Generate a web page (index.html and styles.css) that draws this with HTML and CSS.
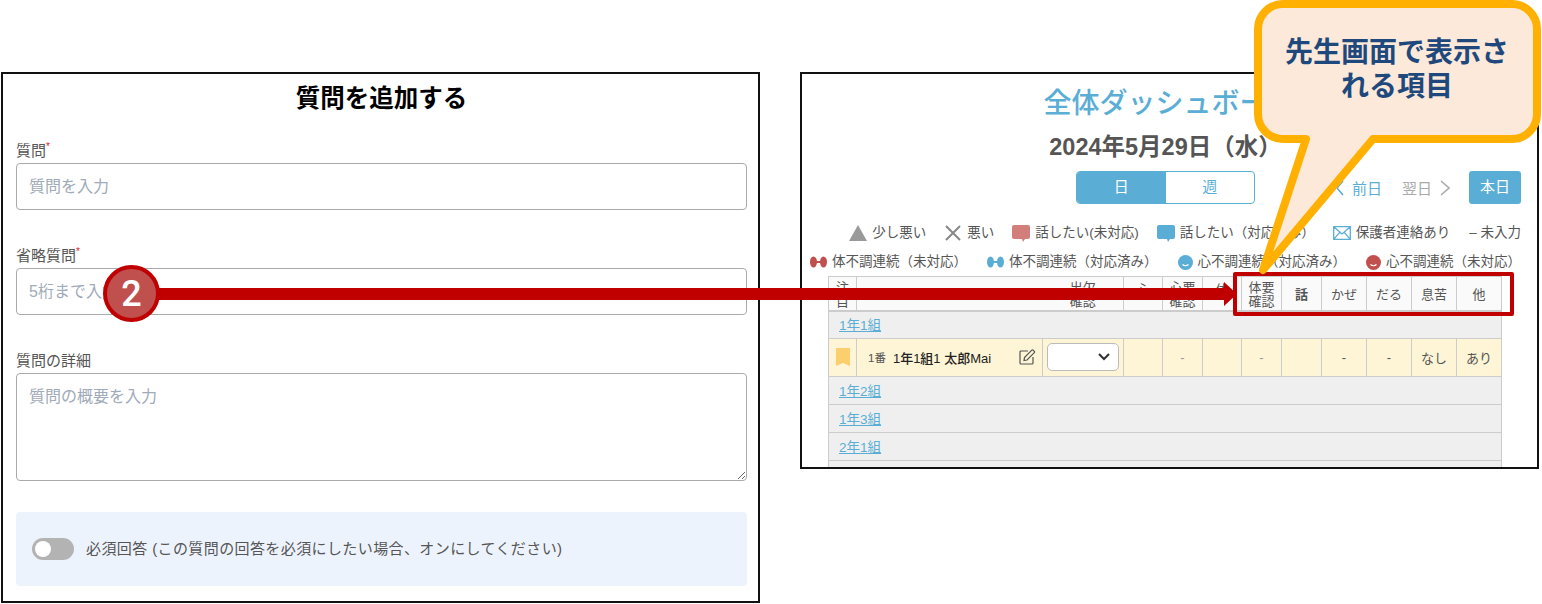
FILE: index.html
```html
<!DOCTYPE html>
<html lang="ja">
<head>
  <meta charset="UTF-8">
  <title>質問を追加する</title>
  <link rel="stylesheet" href="styles.css">
</head>
<body>
  <div class="page">
    <section class="form-panel">
      <h2>質問を追加する</h2>
      <div class="form-group">
        <label>質問<sup>*</sup></label>
        <input type="text" placeholder="質問を入力">
      </div>
      <div class="form-group">
        <label>省略質問<sup>*</sup></label>
        <input type="text" placeholder="5桁まで入力">
      </div>
      <div class="form-group">
        <label>質問の詳細</label>
        <textarea placeholder="質問の概要を入力"></textarea>
      </div>
      <div class="required-box">
        <span class="switch"><span class="knob"></span></span>
        <span class="required-text">必須回答 (この質問の回答を必須にしたい場合、オンにしてください)</span>
      </div>
    </section>

    <section class="dash-panel">
      <h1>全体ダッシュボード</h1>
      <div class="date">2024年5月29日（水）</div>
      <div class="nav-row">
        <div class="toggle">
          <span class="toggle-on">日</span>
          <span class="toggle-off">週</span>
        </div>
        <svg class="chev prev" width="8" height="16" viewBox="0 0 8 16"><path d="M7 1 1 8l6 7" fill="none" stroke="#5aaed6" stroke-width="1.6"/></svg>
        <span class="nav-link">前日</span>
        <span class="nav-link off">翌日</span>
        <svg class="chev next" width="10" height="16" viewBox="0 0 10 16"><path d="M1 1l8 7-8 7" fill="none" stroke="#aaa" stroke-width="1.6"/></svg>
        <span class="today">本日</span>
      </div>

      <div class="legend one">
        <span class="item"><svg width="18" height="16" viewBox="0 0 18 16"><path d="M9 0 18 16H0z" fill="#999"/></svg>少し悪い</span>
        <span class="item"><svg width="18" height="16" viewBox="0 0 18 16"><path d="M2 1l14 14M16 1 2 15" stroke="#888" stroke-width="2"/></svg>悪い</span>
        <span class="item"><svg width="18" height="17" viewBox="0 0 18 17"><path d="M2 0h14a2 2 0 0 1 2 2v10a2 2 0 0 1-2 2h-3l-2 3-1-3H2a2 2 0 0 1-2-2V2a2 2 0 0 1 2-2z" fill="#d27f7c"/></svg>話したい(未対応)</span>
        <span class="item"><svg width="18" height="17" viewBox="0 0 18 17"><path d="M2 0h14a2 2 0 0 1 2 2v10a2 2 0 0 1-2 2h-3l-2 3-1-3H2a2 2 0 0 1-2-2V2a2 2 0 0 1 2-2z" fill="#5aaed6"/></svg>話したい（対応済み）</span>
        <span class="item"><svg width="18" height="14" viewBox="0 0 18 14"><path d="M.7.7h16.600v12.600H.7zM.7.7 9 8l8.300-7.300M.7 13.300l6-7M17.300 13.300l-6-7" fill="none" stroke="#5aaed6" stroke-width="1.300"/></svg>保護者連絡あり</span>
        <span class="item last">– 未入力</span>
      </div>
      <div class="legend two">
        <span class="item"><svg width="17" height="12" viewBox="0 0 17 12"><g fill="#c0504d"><ellipse cx="3.500" cy="6" rx="3.500" ry="5.500"/><ellipse cx="13.500" cy="6" rx="3.500" ry="5.500"/><rect x="5" y="5" width="7" height="2"/></g></svg>体不調連続（未対応）</span>
        <span class="item"><svg width="17" height="12" viewBox="0 0 17 12"><g fill="#5aaed6"><ellipse cx="3.500" cy="6" rx="3.500" ry="5.500"/><ellipse cx="13.500" cy="6" rx="3.500" ry="5.500"/><rect x="5" y="5" width="7" height="2"/></g></svg>体不調連続（対応済み）</span>
        <span class="item"><svg width="15" height="15" viewBox="0 0 15 15"><circle cx="7.500" cy="7.500" r="7.500" fill="#5aaed6"/><path d="M4.500 9.500q3 2.500 6 0" fill="none" stroke="#fff" stroke-width="1.200"/></svg>心不調連続（対応済み）</span>
        <span class="item"><svg width="15" height="15" viewBox="0 0 15 15"><circle cx="7.500" cy="7.500" r="7.500" fill="#c0504d"/><path d="M4.500 9.500q3 2.500 6 0" fill="none" stroke="#fff" stroke-width="1.200"/></svg>心不調連続（未対応）</span>
      </div>

      <table class="dash-table">
        <colgroup>
          <col class="c28"><col class="c186"><col class="c81"><col class="c39"><col class="c40"><col class="c39"><col class="c40"><col class="c40"><col class="c45"><col class="c45"><col class="c45"><col class="c45">
        </colgroup>
        <thead>
          <tr>
            <th>注<br>目</th>
            <th class="no-right"></th>
            <th class="no-left">出欠<br>確認</th>
            <th class="raised">心</th>
            <th>心要<br>確認</th>
            <th class="raised">体</th>
            <th>体要<br>確認</th>
            <th class="strong">話</th>
            <th>かぜ</th>
            <th>だる</th>
            <th>息苦</th>
            <th>他</th>
          </tr>
        </thead>
        <tbody>
          <tr class="group"><td colspan="12"><a href="#">1年1組</a></td></tr>
          <tr class="student">
            <td class="mark"><svg width="14" height="18" viewBox="0 0 14 18"><path d="M0 1a1 1 0 0 1 1-1h12a1 1 0 0 1 1 1v17l-7-3-7 3z" fill="#fbcf6e"/></svg></td>
            <td>
              <div class="name-cell">
                <span class="num">1番</span>
                <span class="name">1年1組1 太郎Mai</span>
                <svg class="edit" width="17" height="16" viewBox="0 0 17 16"><path d="M9 2H2a1 1 0 0 0-1 1v11a1 1 0 0 0 1 1h11a1 1 0 0 0 1-1V8" fill="none" stroke="#555" stroke-width="1.200"/><path d="M5.500 8.500 12.800 1.200a1 1 0 0 1 1.400 0l1.100 1.100a1 1 0 0 1 0 1.400L8 11l-3 .6z" fill="none" stroke="#555" stroke-width="1.200"/></svg>
              </div>
            </td>
            <td>
              <div class="select-box"><svg width="12" height="8" viewBox="0 0 12 8"><path d="M1 1l5 5 5-5" fill="none" stroke="#333" stroke-width="2"/></svg></div>
            </td>
            <td></td>
            <td class="dim">-</td>
            <td></td>
            <td class="dim">-</td>
            <td></td>
            <td>-</td>
            <td>-</td>
            <td>なし</td>
            <td>あり</td>
          </tr>
          <tr class="group"><td colspan="12"><a href="#">1年2組</a></td></tr>
          <tr class="group"><td colspan="12"><a href="#">1年3組</a></td></tr>
          <tr class="group"><td colspan="12"><a href="#">2年1組</a></td></tr>
          <tr class="group"><td colspan="12"></td></tr>
        </tbody>
      </table>
    </section>
  </div>

  <!-- annotations drawn over the two panels -->
  <div class="red-box"></div>
  <svg class="arrow" width="1090" height="24" viewBox="0 0 1090 24"><path d="M0 6h1077V0l13 12-13 12v-6H0z" fill="#c00000"/></svg>
  <div class="badge">2</div>
  <svg class="callout" width="292" height="276" viewBox="0 0 292 276"><path d="M33 4h229a25 25 0 0 1 25 25v85a25 25 0 0 1-25 25H123L13 270l43-131H33A25 25 0 0 1 8 114V29A25 25 0 0 1 33 4z" fill="#fce9d9" stroke="#ffb000" stroke-width="8" stroke-linejoin="round"/></svg>
  <div class="callout-text">先生画面で表示さ<br>れる項目</div>
</body>
</html>
```

FILE: styles.css
```css
* {
  box-sizing: border-box;
}
body {
  margin: 0;
  background: #fff;
  font-family: "Liberation Sans", "Noto Sans CJK JP", sans-serif;
  color: #555;
}
.page {
  display: flex;
  align-items: flex-start;
  gap: 40px;
  padding: 72px 0 0 1px;
  width: 1542px;
  height: 604px;
  overflow: hidden;
}

/* left panel */
.form-panel {
  width: 759px;
  height: 531px;
  border: 2px solid #111;
  padding: 0 11px 0 13px;
}
.form-panel h2 {
  margin: 0;
  height: 68px;
  padding-top: 7px;
  font-size: 24.500px;
  line-height: 36px;
  font-weight: 700;
  color: #000;
  text-align: center;
}
.form-group {
  margin-bottom: 37px;
}
.form-group label {
  display: block;
  height: 18px;
  margin-bottom: 3px;
  font-size: 15px;
  line-height: 18px;
  color: #555;
}
.form-group sup {
  color: #e02020;
  font-size: 10px;
  line-height: 0;
}
.form-group input,
.form-group textarea {
  display: block;
  width: 100%;
  padding: 0 12px;
  border: 1px solid #aaa;
  border-radius: 4px;
  font-family: inherit;
  font-size: 16px;
  background: #fff;
}
.form-group input {
  height: 47px;
}
.form-group textarea {
  height: 108px;
  padding-top: 13px;
  line-height: 20px;
}
input::placeholder,
textarea::placeholder {
  color: #a0aab8;
  opacity: 1;
}
.required-box {
  display: flex;
  align-items: center;
  gap: 12px;
  height: 74px;
  margin-top: -6px;
  padding-left: 16px;
  border-radius: 4px;
  background: #edf3fd;
  font-size: 15px;
}
.required-text {
  padding-bottom: 3px;
  letter-spacing: .4px;
}
.switch {
  display: block;
  width: 42px;
  height: 22px;
  padding: 3px;
  border-radius: 11px;
  background: #b3b3b3;
}
.knob {
  display: block;
  width: 16px;
  height: 16px;
  border-radius: 50%;
  background: #fff;
}

/* right panel */
.dash-panel {
  width: 739px;
  height: 397px;
  border: 2px solid #111;
  padding: 10px 16px 0 27px;
  overflow: hidden;
}
.dash-panel h1 {
  margin: 0 -16px 0 -27px;
  height: 40px;
  font-size: 28px;
  line-height: 40px;
  font-weight: 500;
  color: #5aaed6;
  text-align: center;
}
.date {
  margin: 8px -16px 0 -27px;
  padding-right: 8px;
  height: 30px;
  font-size: 23.500px;
  line-height: 30px;
  font-weight: 700;
  color: #555;
  text-align: center;
}
.nav-row {
  display: flex;
  align-items: center;
  height: 33px;
  margin-top: 9px;
  padding-left: 247px;
  font-size: 15px;
}
.toggle {
  display: flex;
  width: 179px;
  height: 33px;
  border: 1px solid #5aaed6;
  border-radius: 4px;
  overflow: hidden;
  text-align: center;
  line-height: 30px;
}
.toggle-on {
  flex: 1;
  background: #5aaed6;
  color: #fff;
}
.toggle-off {
  flex: 1;
  color: #5aaed6;
}
.prev {
  margin-left: 81px;
}
.nav-link {
  margin-left: 8px;
  color: #5aaed6;
}
.nav-link.off {
  margin-left: 20px;
  color: #aaa;
}
.next {
  margin-left: 8px;
}
.today {
  width: 52px;
  height: 33px;
  margin-left: 19px;
  border-radius: 3px;
  background: #5aaed6;
  color: #fff;
  text-align: center;
  line-height: 31px;
}
.legend {
  display: flex;
  justify-content: flex-end;
  height: 20px;
  font-size: 13.500px;
  line-height: 20px;
  color: #555;
  white-space: nowrap;
}
.legend.one {
  gap: 18px;
  margin-top: 19px;
}
.legend.two {
  gap: 20px;
  margin-top: 9px;
}
.item {
  display: flex;
  align-items: center;
  gap: 5px;
}
.item.last {
  margin-left: 1px;
}

/* table */
.dash-table {
  width: 673px;
  margin: 4px 0 0 -1px;
  table-layout: fixed;
  border-collapse: collapse;
  font-size: 13px;
  color: #555;
}
.c28 { width: 28px; }
.c186 { width: 186px; }
.c81 { width: 81px; }
.c39 { width: 39px; }
.c40 { width: 40px; }
.c45 { width: 45px; }
.dash-table th,
.dash-table td {
  padding: 0 0 1px;
  border: 1px solid #ccc;
  text-align: center;
}
.dash-table th {
  height: 34px;
  padding: 3px 0 0;
  border-bottom: 2px solid #ccc;
  background: #fafafa;
  font-weight: 400;
  font-size: 13px;
  line-height: 14px;
}
.dash-table th.raised {
  padding: 0 0 7px;
}
.dash-table th.strong {
  font-weight: 700;
}
.dash-table th.no-right {
  border-right: 0;
}
.dash-table th.no-left {
  border-left: 0;
}
.dash-table .group td {
  height: 28px;
  padding: 0 0 1px 10px;
  background: #efefef;
  text-align: left;
  font-size: 13.500px;
}
.group a {
  color: #5aaed6;
}
.dash-table .student td {
  height: 38px;
  background: #fdf5d5;
}
.dash-table .student td.dim {
  color: #999;
}
.mark svg {
  display: block;
  margin: 0 auto;
}
.name-cell {
  display: flex;
  align-items: center;
  padding: 0 6px 0 11px;
}
.num {
  font-size: 11.500px;
  margin-right: 7px;
}
.name {
  font-weight: 500;
  color: #222;
}
.edit {
  margin-left: auto;
}
.select-box {
  display: flex;
  align-items: center;
  justify-content: flex-end;
  width: 72px;
  height: 28px;
  margin-left: 4px;
  padding-right: 8px;
  border: 1px solid #bbb;
  border-radius: 5px;
  background: #fff;
}

/* annotations */
.red-box {
  position: absolute;
  left: 1233px;
  top: 272px;
  width: 281px;
  height: 44px;
  border: 4px solid #c00000;
  border-radius: 2px;
}
.arrow {
  position: absolute;
  left: 147px;
  top: 282px;
}
.badge {
  position: absolute;
  left: 103px;
  top: 265px;
  width: 57px;
  height: 57px;
  border: 4px solid #c00000;
  border-radius: 50%;
  background: #c0504d;
  color: #fff;
  font-family: Roboto, sans-serif;
  font-size: 36px;
  font-weight: 500;
  line-height: 51px;
  text-align: center;
}
.callout {
  position: absolute;
  left: 1250px;
  top: 0;
}
.callout-text {
  position: absolute;
  left: 1262px;
  top: 36px;
  width: 270px;
  font-size: 28px;
  line-height: 34px;
  font-weight: 700;
  color: #1f497d;
  text-align: center;
}
```
